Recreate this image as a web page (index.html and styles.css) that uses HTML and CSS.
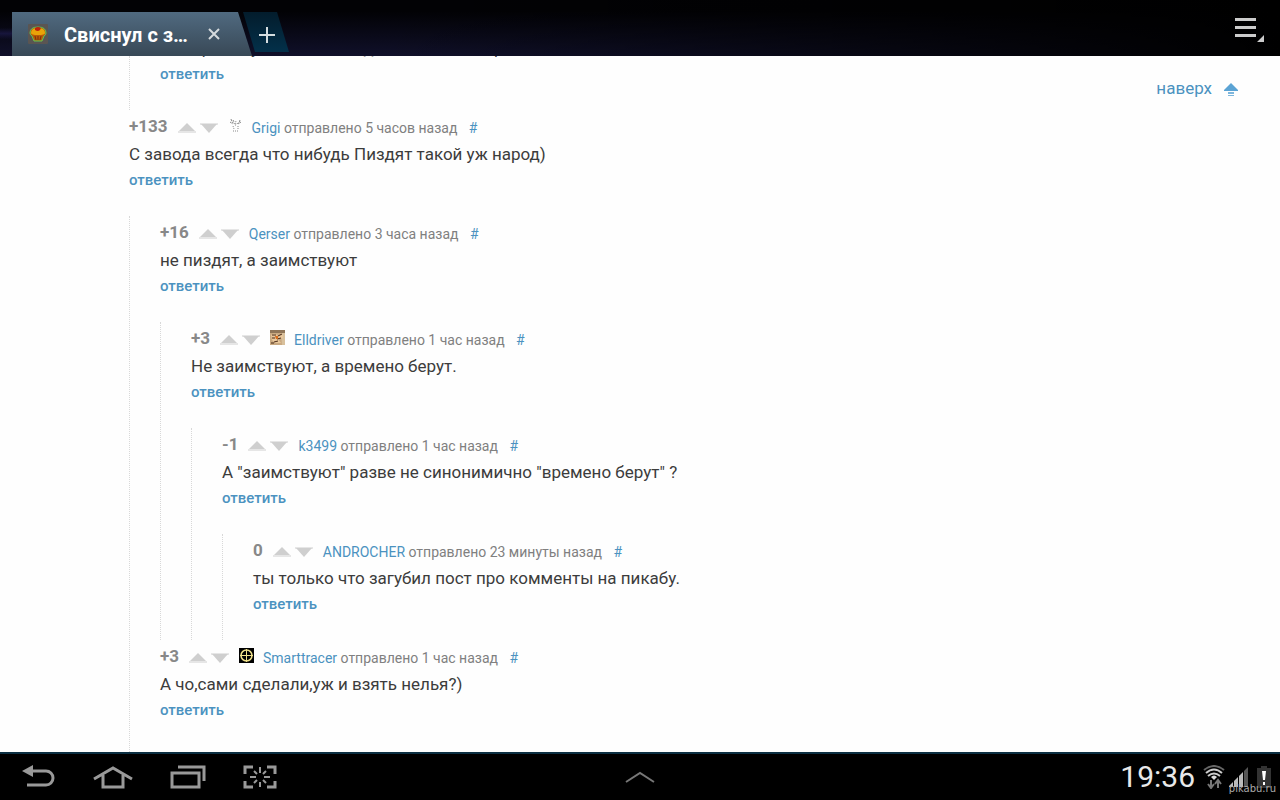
FILE: index.html
```html
<!DOCTYPE html>
<html lang="ru">
<head>
<meta charset="utf-8">
<meta name="viewport" content="width=device-width, initial-scale=1">
<title>Свиснул с з…</title>
<link rel="stylesheet" href="styles.css">
</head>
<body>
<svg class="defs" width="0" height="0" aria-hidden="true">
  <symbol id="up" viewBox="0 0 18 10"><path d="M9 0L17 8H1z" fill="#cfcfcf"/><path d="M0 8H18V10H0z" fill="#e6e6e6"/></symbol>
  <symbol id="down" viewBox="0 0 18 10"><path d="M0 0H18V2H0z" fill="#e6e6e6"/><path d="M1 1H17L9 10z" fill="#cfcfcf"/></symbol>
</svg>

<header class="tabbar">
  <div class="tab">
    <svg class="favicon" viewBox="0 0 20 20" aria-hidden="true"><rect width="20" height="20" rx="1" fill="#5a5552"/><path d="M2 9Q2 3 10 3Q18 3 18 9Q18 11 16 12L14 17H6L4 12Q2 11 2 9z" fill="#b85a08" stroke="#5fc653"/><path d="M3 9Q3 4 10 4Q17 4 17 9Q17 11 10 11Q3 11 3 9z" fill="#e9a408"/><path d="M7 4Q10 2 13 4L12 6Q10 8 7 6z" fill="#c0230b"/><path d="M7 12L8 16M10 12V16M13 12L12 16" stroke="#7b3303"/></svg>
    <span class="tab-title">Свиснул с з…</span>
    <button class="tab-close" aria-label="Закрыть вкладку"><svg viewBox="0 0 12 12"><path d="M1 1L11 11M11 1L1 11" stroke="#d5dadd" stroke-width="2"/></svg></button>
  </div>
  <button class="tab-new" aria-label="Новая вкладка"><svg viewBox="0 0 18 18"><path d="M9 1V17M1 9H17" stroke="#d5dde0" stroke-width="2"/></svg></button>
  <button class="menu" aria-label="Меню"><svg viewBox="0 0 29 24"><path d="M0 0H21V3H0zM0 8H21V11H0zM0 16H21V19H0zM29 17V24H22z" fill="#ccc"/></svg></button>
</header>

<main class="page">
  <div class="thread">
    <article class="comment clipped">
      <p class="text">Вот брать сумки нам не идёт и вот так мир</p>
      <a class="reply" href="#">ответить</a>
    </article>
  </div>

  <article class="comment">
    <div class="head">
      <b class="score">+133</b>
      <button class="vote" aria-label="Плюс"><svg><use href="#up"/></svg></button>
      <button class="vote" aria-label="Минус"><svg><use href="#down"/></svg></button>
      <svg class="avatar" viewBox="0 0 15 15" aria-hidden="true"><g fill="none" stroke="#888"><path d="M3 1L4 4L7 6L8 3M12 2L11 5L8 6M5 2L6 4M2 4L5 6M13 4L10 6" stroke-dasharray="2 1"/><path d="M5 8L6 11M10 8V11M5 13H10M7 7H9" stroke-dasharray="1 1"/></g></svg>
      <span class="meta"><a href="#">Grigi</a> отправлено 5 часов назад <a class="anchor" href="#">#</a></span>
    </div>
    <p class="text">С завода всегда что нибудь Пиздят такой уж народ)</p>
    <a class="reply" href="#">ответить</a>
  </article>

  <div class="thread last">
    <article class="comment">
      <div class="head">
        <b class="score">+16</b>
        <button class="vote" aria-label="Плюс"><svg><use href="#up"/></svg></button>
        <button class="vote" aria-label="Минус"><svg><use href="#down"/></svg></button>
        <span class="meta"><a href="#">Qerser</a> отправлено 3 часа назад <a class="anchor" href="#">#</a></span>
      </div>
      <p class="text">не пиздят, а заимствуют</p>
      <a class="reply" href="#">ответить</a>
    </article>
    <div class="thread">
      <article class="comment">
        <div class="head">
          <b class="score">+3</b>
          <button class="vote" aria-label="Плюс"><svg><use href="#up"/></svg></button>
          <button class="vote" aria-label="Минус"><svg><use href="#down"/></svg></button>
          <svg class="avatar" viewBox="0 0 15 15" aria-hidden="true"><rect width="15" height="15" fill="#c9a981"/><path d="M0 0H15V3H0z" fill="#8f7558"/><path d="M11 3H15V15H12z" fill="#d8c09c"/><path d="M1 5Q5 2 8 6L13 5V8L8 9L11 13H5L2 10z" fill="#e9c79b"/><path d="M2 5H6M8 6L12 4M2 8H5M7 9L11 8M4 12L8 11M1 13H4" stroke="#4b2a16"/><path d="M5 6H8V9H6z" fill="#d96d1c"/></svg>
          <span class="meta"><a href="#">Elldriver</a> отправлено 1 час назад <a class="anchor" href="#">#</a></span>
        </div>
        <p class="text">Не заимствуют, а времено берут.</p>
        <a class="reply" href="#">ответить</a>
      </article>
      <div class="thread">
        <article class="comment">
          <div class="head">
            <b class="score">-1</b>
            <button class="vote" aria-label="Плюс"><svg><use href="#up"/></svg></button>
            <button class="vote" aria-label="Минус"><svg><use href="#down"/></svg></button>
            <span class="meta"><a href="#">k3499</a> отправлено 1 час назад <a class="anchor" href="#">#</a></span>
          </div>
          <p class="text">А "заимствуют" разве не синонимично "времено берут" ?</p>
          <a class="reply" href="#">ответить</a>
        </article>
        <div class="thread">
          <article class="comment">
            <div class="head">
              <b class="score">0</b>
              <button class="vote" aria-label="Плюс"><svg><use href="#up"/></svg></button>
              <button class="vote" aria-label="Минус"><svg><use href="#down"/></svg></button>
              <span class="meta"><a href="#">ANDROCHER</a> отправлено 23 минуты назад <a class="anchor" href="#">#</a></span>
            </div>
            <p class="text">ты только что загубил пост про комменты на пикабу.</p>
            <a class="reply" href="#">ответить</a>
          </article>
        </div>
      </div>
    </div>
    <article class="comment">
      <div class="head">
        <b class="score">+3</b>
        <button class="vote" aria-label="Плюс"><svg><use href="#up"/></svg></button>
        <button class="vote" aria-label="Минус"><svg><use href="#down"/></svg></button>
        <svg class="avatar" viewBox="0 0 15 15" aria-hidden="true"><rect width="15" height="15" fill="#000"/><path d="M7.500 1V14M1 7.500H14" stroke="#efe08a"/><circle cx="7.500" cy="7.500" r="5.500" fill="none" stroke="#efe08a" stroke-width="1.500"/></svg>
        <span class="meta"><a href="#">Smarttracer</a> отправлено 1 час назад <a class="anchor" href="#">#</a></span>
      </div>
      <p class="text">А чо,сами сделали,уж и взять нелья?)</p>
      <a class="reply" href="#">ответить</a>
    </article>
  </div>

  <a class="totop" href="#">наверх <svg viewBox="0 0 14 14" aria-hidden="true"><path d="M7 0L14 7V8H0V7z" fill="#5ba3d4"/><path d="M4 9H10V11H4zM4 12H10V13H4z" fill="#7db6dc"/></svg></a>
</main>

<footer class="sysbar">
  <nav class="keys">
    <button aria-label="Назад"><svg width="34" height="24" viewBox="0 0 34 24"><path d="M9 6H24A7 7 0 0 1 24 20H5" fill="none" stroke="#999" stroke-width="3"/><path d="M0 6L11 0V12z" fill="#999"/></svg></button>
    <button aria-label="Домой"><svg width="40" height="24" viewBox="0 0 40 24"><path d="M1 14L20 3L39 14M10 10V22H30V10" fill="none" stroke="#999" stroke-width="3"/></svg></button>
    <button aria-label="Недавние"><svg width="36" height="24" viewBox="0 0 36 24"><path d="M2 8H29V22H2z" fill="none" stroke="#999" stroke-width="3"/><path d="M8 2H34V16" fill="none" stroke="#999" stroke-width="3"/></svg></button>
    <button aria-label="Снимок экрана"><svg width="34" height="24" viewBox="0 0 34 24"><path d="M2 9V2H10M24 2H32V9M32 16V22H24M10 22H2V16" fill="none" stroke="#999" stroke-width="3"/><path d="M17 2V8M17 17V22M7 12H13M21 12H27M11 6L14 9M23 6L20 9M11 18L14 15M23 18L20 15" stroke="#999" stroke-width="2"/></svg></button>
  </nav>
  <button class="expand" aria-label="Развернуть"><svg width="30" height="12" viewBox="0 0 30 12"><path d="M1 11L15 2L29 11" fill="none" stroke="#777" stroke-width="2"/></svg></button>
  <div class="status">
    <time>19:36</time>
    <svg class="wifi" width="22" height="24" viewBox="0 0 22 24" aria-hidden="true"><g fill="none" stroke-width="2"><path d="M1 5Q11-3 21 5" stroke="#666"/><path d="M3 8Q11 1 19 8M5 11Q11 6 17 11" stroke="#ccc"/></g><path d="M8 12Q11 9 14 12L11 15z" fill="#ddd"/><path d="M8 15V22M5 19L8 23L11 19M15 23V16M12 19L15 15L18 19" fill="none" stroke="#777" stroke-width="2"/></svg>
    <svg class="signal" width="20" height="20" viewBox="0 0 20 20" aria-hidden="true"><path d="M0 20V19L4 15V20zM5 20V14L9 10V20zM10 20V9L14 5V20z" fill="#bbb"/><path d="M15 20V4L19 0V20z" fill="#555"/></svg>
    <svg class="battery" width="14" height="22" viewBox="0 0 14 22" aria-hidden="true"><path d="M4 0H10V2H14V22H0V2H4z" fill="#333"/><path d="M5 5H9L8 14H6zM6 16H8V19H6z" fill="#fff"/></svg>
  </div>
  <span class="mark">pikabu.ru</span>
</footer>
</body>
</html>
```
FILE: styles.css
```css
* { box-sizing: border-box; }
body {
  margin: 0;
  height: 100vh;
  display: flex;
  flex-direction: column;
  overflow: hidden;
  background: #fefefe;
  color: #3c3c3c;
  font-family: Roboto, "Noto Sans", sans-serif;
}
svg { display: block; }
.defs { position: absolute; }
button { padding: 0; border: 0; background: none; font: inherit; color: inherit; }
a { color: #4b92c0; text-decoration: none; }

/* browser tabs */
.tabbar {
  flex: none;
  display: flex;
  align-items: flex-start;
  height: 56px;
  padding: 12px 16px 0 12px;
  background: radial-gradient(ellipse at 0 60%, #17153c 0, transparent 12%), linear-gradient(90deg, transparent 30%, #000 100%), linear-gradient(#020205 20%, #10102a 100%);
}
.tab {
  display: flex;
  align-items: center;
  width: 240px;
  height: 44px;
  padding: 0 0 0 16px;
  background: linear-gradient(#506a80, #384856);
  clip-path: polygon(0 0, 226px 0, 100% 100%, 0 100%);
}
.favicon { width: 20px; height: 20px; margin-right: 16px; flex: none; }
.tab-title {
  width: 126px;
  padding-top: 2px;
  white-space: nowrap;
  color: #fff;
  font-size: 20px;
  font-weight: 700;
  line-height: 24px;
}
.tab-close { margin-left: 18px; }
.tab-close svg { width: 12px; height: 12px; }
.tab-new {
  display: grid;
  place-items: center;
  width: 46px;
  height: 40px;
  margin-left: -9px;
  padding: 6px 0 0 2px;
  background: linear-gradient(#031c2c, #03304a);
  clip-path: polygon(0 0, 34px 0, 100% 100%, 12px 100%);
}
.tab-new svg { width: 18px; height: 18px; }
.menu { margin: 6px 0 0 auto; }
.menu svg { width: 29px; height: 24px; }

/* comments */
.page {
  position: relative;
  flex: 1;
  min-height: 0;
  overflow: hidden;
  padding-left: 129px;
}
.thread { padding-left: 30px; border-left: 1px dotted #d8d8d8; }
.thread.last { padding-bottom: 24px; }
.comment { height: 106px; }
.comment.clipped { display: flow-root; height: 54px; }
.clipped .text { margin-top: -21px; }
.head { display: flex; align-items: center; height: 31px; }
.score { margin-right: 10px; color: #888; font-size: 17px; line-height: 20px; }
.vote { margin: 5px 4px 0 0; }
.vote svg { width: 18px; height: 10px; }
.avatar { width: 15px; height: 15px; margin: 0 3px 0 6px; }
.meta { margin: 4px 0 0 6px; color: #808080; font-size: 14px; line-height: 20px; white-space: nowrap; }
.anchor { margin-left: 8px; }
.text { margin: 0; height: 26px; font-size: 17px; line-height: 26px; }
.reply { display: block; width: max-content; font-size: 15px; font-weight: 500; line-height: 26px; }
.totop {
  position: absolute;
  top: 20px;
  right: 42px;
  display: flex;
  align-items: center;
  gap: 12px;
  font-size: 17px;
  line-height: 24px;
}
.totop svg { width: 14px; height: 14px; margin-top: 4px; }

/* system bar */
.sysbar {
  position: relative;
  flex: none;
  display: grid;
  grid-template-columns: 1fr auto 1fr;
  align-items: center;
  height: 48px;
  padding: 0 9px;
  border-top: 2px solid #0b2f42;
  background: #000;
}
.keys { display: flex; align-items: center; gap: 37px; padding-left: 13px; }
.status { display: flex; align-items: center; justify-content: flex-end; }
.status time { color: #e8e8e8; font-size: 30px; line-height: 40px; margin-right: 8px; }
.signal { margin: 0 8px 0 4px; }
.mark {
  position: absolute;
  right: 4px;
  bottom: 4px;
  color: #aaa;
  font: 10px/14px "DejaVu Sans", sans-serif;
}
```
